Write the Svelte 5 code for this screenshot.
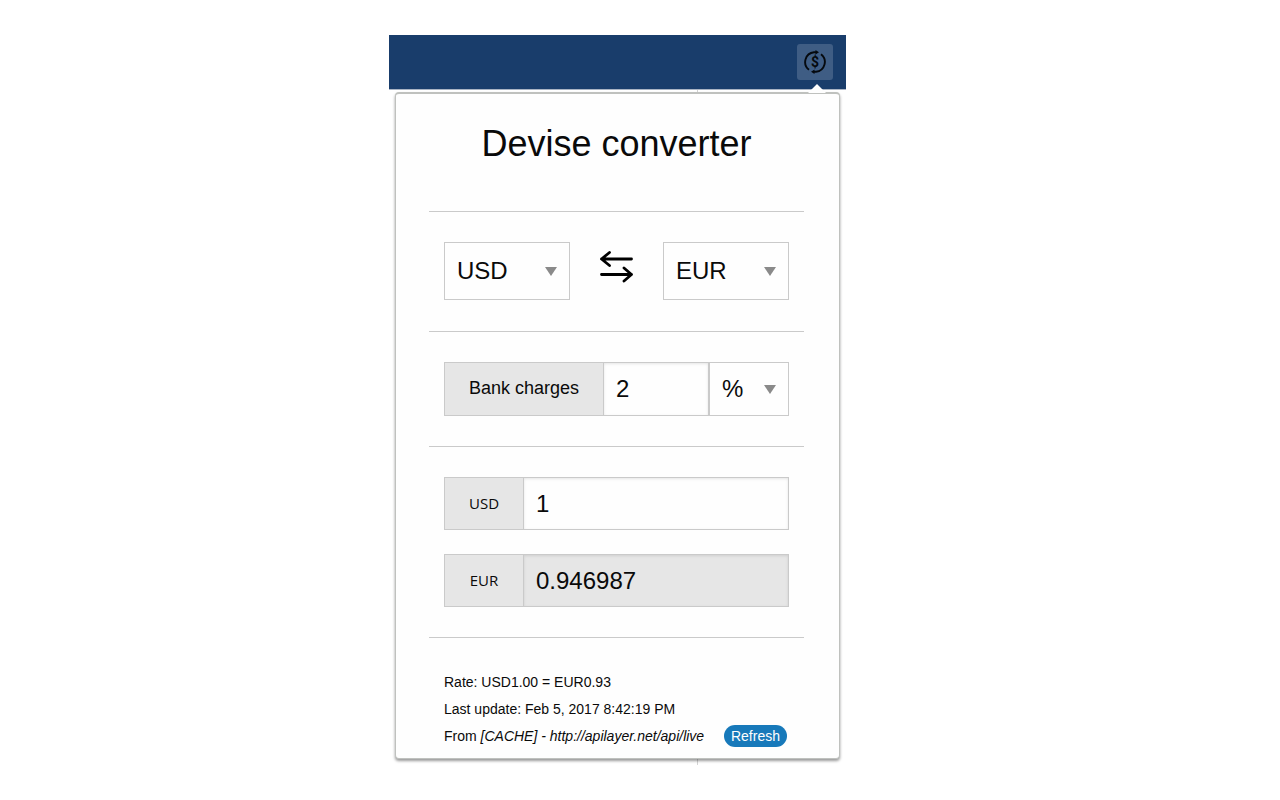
<script>
  let from = $state('USD');
  let to = $state('EUR');
  let charges = $state('2');
  let unit = $state('%');
  let amount = $state('1');
  let result = $state('0.946987');

  function swap() {
    [from, to] = [to, from];
  }
</script>

<main class="page">
  <div class="window">
    <header class="toolbar">
      <button class="extension" type="button" aria-label="Devise converter">
        <svg viewBox="0 0 24 24" width="24" height="24" aria-hidden="true">
          <g fill="none" stroke="#05090e" stroke-width="1.9">
            <path d="M6 19.800A9.800 9.800 0 0 1 11 2.300H13.500" />
            <path d="M18 4.200A9.800 9.800 0 0 1 13 21.700H10.500" />
          </g>
          <path d="M12.500 0l3.500 2.300-3.500 2.300zM11.500 19.400l-3.500 2.300 3.500 2.300z" fill="#05090e" />
          <text x="12" y="17" text-anchor="middle">$</text>
        </svg>
      </button>
    </header>

    <div class="backdrop">
      <section class="panel">
        <h1>Devise converter</h1>

        <div class="block currencies">
          <select class="field currency" aria-label="From currency" bind:value={from}>
            <option>USD</option>
            <option>EUR</option>
          </select>
          <button class="swap" type="button" aria-label="Swap currencies" onclick={swap}>
            <svg viewBox="0 0 34 32" width="34" height="32" aria-hidden="true">
              <path d="M31.500 8H1.500M9.500 1.500L1.500 8l8 6.500M1.500 23.500h30M24 17L31.500 23.500l-7.500 6.500" />
            </svg>
          </button>
          <select class="field currency" aria-label="To currency" bind:value={to}>
            <option>USD</option>
            <option>EUR</option>
          </select>
        </div>

        <div class="block group charges">
          <label for="charges">Bank charges</label>
          <input class="field" id="charges" type="text" bind:value={charges} />
          <select class="field unit" aria-label="Charges unit" bind:value={unit}>
            <option>%</option>
            <option>$</option>
          </select>
        </div>

        <div class="block amounts">
          <div class="group">
            <label class="code" for="amount">{from}</label>
            <input class="field" id="amount" type="text" bind:value={amount} />
          </div>
          <div class="group">
            <label class="code" for="result">{to}</label>
            <input class="field" id="result" type="text" readonly value={result} />
          </div>
        </div>

        <footer class="block info">
          <p>Rate: USD1.00 = EUR0.93</p>
          <p>Last update: Feb 5, 2017 8:42:19 PM</p>
          <div class="source">
            <p>From <em>[CACHE] - http://apilayer.net/api/live</em></p>
            <button class="refresh" type="button">Refresh</button>
          </div>
        </footer>
      </section>
    </div>
  </div>
</main>

<style>
  :global(body) {
    background: #fff;
  }

  .page,
  .page * {
    box-sizing: border-box;
  }

  .page {
    display: flex;
    justify-content: center;
    padding: 35px 45px 33px 0;
    color: #0a0a0a;
    font-family: "Liberation Sans", Arial, sans-serif;
  }

  .window {
    width: 100%;
    max-width: 457px;
  }

  .toolbar {
    display: flex;
    justify-content: flex-end;
    padding: 9px 13px;
    background: #193d6b;
    border-bottom: 1px solid #a9b4c4;
  }

  .extension {
    display: flex;
    align-items: center;
    justify-content: center;
    width: 36px;
    height: 36px;
    padding: 0;
    border: 0;
    border-radius: 3px;
    background: #3f5d84;
  }

  .extension text {
    font: bold 14px Roboto, sans-serif;
    fill: #05090e;
  }

  .backdrop {
    padding: 2px 6px 6px;
    background: linear-gradient(#d4d4d4, #d4d4d4) 308px 0 / 1px 100% no-repeat;
  }

  .panel {
    position: relative;
    padding: 0 35px 8px 33px;
    border: 1px solid #bfc1be;
    border-top-width: 2px;
    border-radius: 4px;
    background: #fefefe;
    box-shadow: 0 2px 3px rgba(0, 0, 0, 0.4);
  }

  .panel::before {
    content: "";
    position: absolute;
    top: -10px;
    right: 13px;
    border: solid transparent;
    border-width: 0 9px 9px;
    border-bottom-color: #fefefe;
  }

  h1 {
    margin: 0;
    padding: 25px 0 42px;
    font-size: 36px;
    font-weight: 400;
    line-height: 50px;
    text-align: center;
  }

  .block {
    padding: 30px 15px;
    border-top: 1px solid #cacaca;
  }

  .field {
    min-width: 0;
    margin: 0;
    padding: 0 12px;
    border: 1px solid #cacaca;
    border-radius: 0;
    outline: 0;
    color: #0a0a0a;
    background-color: #fefefe;
    font: 24px "Liberation Sans", Arial, sans-serif;
  }

  input.field {
    flex: 1;
    box-shadow: inset 0 1px 3px rgba(10, 10, 10, 0.1);
  }

  input.field[readonly] {
    background-color: #e6e6e6;
  }

  select.field {
    padding-bottom: 2px;
    appearance: none;
    background-image: url("data:image/svg+xml,%3Csvg xmlns='http://www.w3.org/2000/svg' width='12' height='9'%3E%3Cpath d='M0 0h12L6 9z' fill='%238a8a8a'/%3E%3C/svg%3E");
    background-repeat: no-repeat;
    background-position: right 12px center;
  }

  .currencies {
    display: flex;
    justify-content: space-between;
    padding-bottom: 31px;
  }

  .currency {
    width: 126px;
    height: 58px;
  }

  .swap {
    padding: 0 0 8px;
    border: 0;
    background: none;
  }

  .swap svg {
    display: block;
  }

  .swap path {
    fill: none;
    stroke: #000;
    stroke-width: 2.8;
    stroke-linecap: round;
    stroke-linejoin: round;
  }

  .group {
    display: flex;
    min-width: 0;
  }

  .group .field {
    height: 53px;
  }

  .group label {
    padding: 0 24px;
    border: 1px solid #cacaca;
    border-right: 0;
    background: #e6e6e6;
    font-size: 18px;
    line-height: 51px;
    text-align: center;
    white-space: nowrap;
  }

  .charges .field {
    height: 54px;
  }

  .group .unit {
    width: 80px;
  }

  .group .code {
    flex: 0 0 79px;
    font-family: "Open Sans", sans-serif;
    font-size: 15px;
  }

  .amounts {
    display: grid;
    grid-template-columns: minmax(0, 1fr);
    gap: 24px;
  }

  .info {
    padding: 31px 15px 0;
    font-size: 14px;
    line-height: 27px;
  }

  .info p {
    margin: 0;
  }

  .source {
    display: flex;
    align-items: baseline;
    justify-content: space-between;
    padding-right: 2px;
  }

  .refresh {
    padding: 0 7px;
    border: 0;
    border-radius: 11px;
    color: #fefefe;
    background: #1779ba;
    font: 14px/22px "Liberation Sans", Arial, sans-serif;
  }
</style>
